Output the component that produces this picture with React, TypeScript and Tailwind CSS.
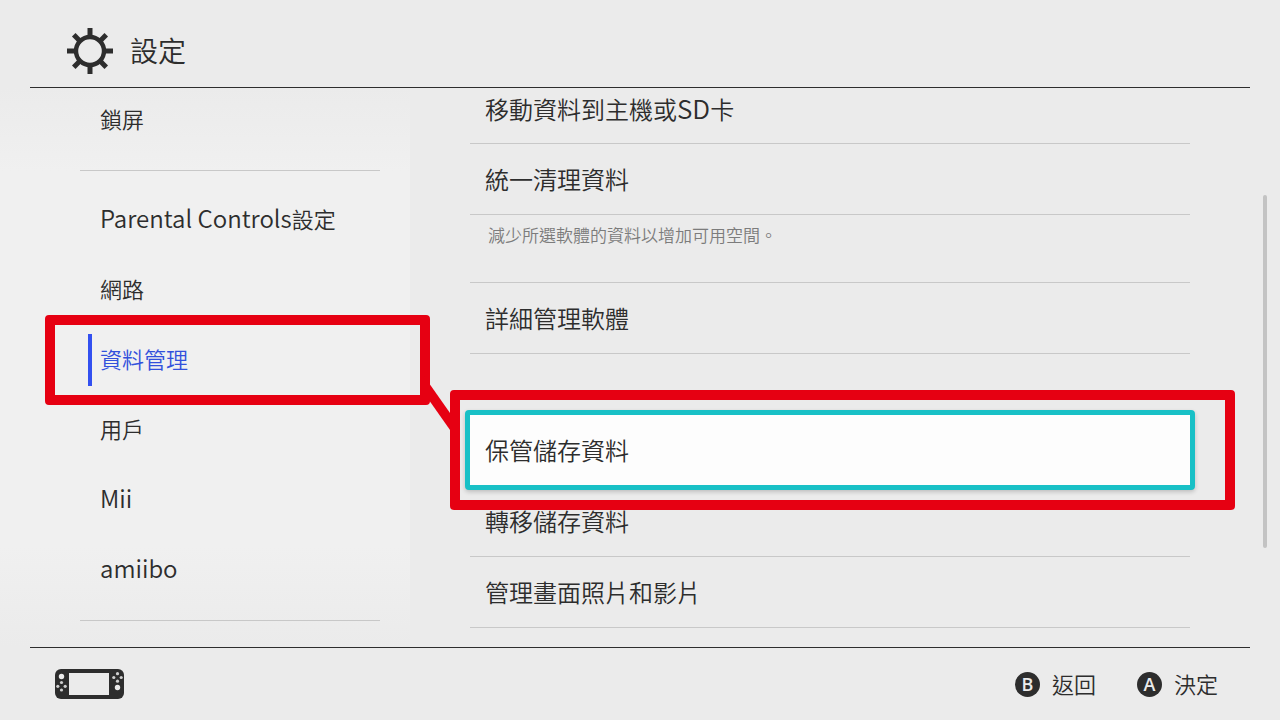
import { useState } from 'react';
import type { ReactNode } from 'react';

type NavItem = {
  id: string;
  label: ReactNode;
};

// Latin glyphs are set slightly larger than the CJK ones
const Latin = ({ children, large = false }: { children: string; large?: boolean }) => (
  <span className={large ? 'text-[26px]' : 'text-[24px]'}>
    {children}
  </span>
);

const topItems: NavItem[] = [{ id: 'lock', label: '鎖屏' }];

const mainItems: NavItem[] = [
  { id: 'parental', label: <><Latin>Parental Controls</Latin>設定</> },
  { id: 'network', label: '網路' },
  { id: 'data', label: '資料管理' },
  { id: 'users', label: '用戶' },
  { id: 'mii', label: <Latin>Mii</Latin> },
  { id: 'amiibo', label: <Latin>amiibo</Latin> },
];

const GearIcon = () => (
  <svg viewBox="0 0 48 48" className="h-12 w-12" fill="none" stroke="#2d2d2d" aria-hidden="true">
    <circle cx="24" cy="24" r="14" strokeWidth="4.4" />
    {[0, 45, 90, 135, 180, 225, 270, 315].map((angle) => (
      <path key={angle} d="M24 1v8" strokeWidth="5" transform={`rotate(${angle} 24 24)`} />
    ))}
  </svg>
);

const ConsoleIcon = () => (
  <svg viewBox="0 0 69 30" className="h-[30px] w-[69px]" aria-hidden="true">
    <rect width="69" height="30" rx="6" fill="#2d2d2d" />
    <g fill="#ebebeb">
      <rect x="14" y="4" width="40" height="22" />
      <circle cx="6.5" cy="7.5" r="2.7" />
      <circle cx="62.5" cy="18.5" r="2.7" />
      <g fill="#d0d0d0">
        <circle cx="6.5" cy="13.5" r="1.6" />
        <circle cx="2.8" cy="17.3" r="1.6" />
        <circle cx="10.2" cy="17.3" r="1.6" />
        <circle cx="6.5" cy="21" r="1.6" />
        <circle cx="62.5" cy="4.7" r="1.6" />
        <circle cx="58.8" cy="8.5" r="1.6" />
        <circle cx="66.2" cy="8.5" r="1.6" />
        <circle cx="62.5" cy="12.2" r="1.6" />
      </g>
    </g>
  </svg>
);

const NavButton = ({ item, active, onSelect }: {
  item: NavItem;
  active: boolean;
  onSelect: (id: string) => void;
}) => (
  <li className="relative">
    <button
      type="button"
      onClick={() => onSelect(item.id)}
      className={`flex h-[70px] w-full items-center pl-2 text-left text-[22px] ${
        active ? 'text-[#3250dc]' : 'text-[#2d2d2d]'
      }`}
    >
      <span
        className={`flex h-[52px] items-center border-l-4 pb-1 pl-2 ${
          active ? 'border-[#3250f0]' : 'border-transparent'
        }`}
      >
        <span className="leading-8">{item.label}</span>
      </span>
    </button>
    {item.id === 'data' && (
      <div className="pointer-events-none absolute -top-[10px] -right-[50px] -bottom-[10px] -left-[35px] rounded-[4px] border-[10px] border-[#e60012]" />
    )}
  </li>
);

const Divider = () => (
  <div className="flex h-[30px] items-center">
    <hr className="w-full border-[#c8c8c8]" />
  </div>
);

const Row = ({ children, focused = false }: { children: ReactNode; focused?: boolean }) => (
  <button
    type="button"
    className={`relative flex h-[71px] w-full items-center border-b pl-[15px] text-left text-[24px] leading-8 ${
      focused ? 'border-transparent' : 'border-[#c8c8c8]'
    }`}
  >
    {focused && (
      <span className="absolute -inset-x-[5px] -top-[5px] -bottom-[5px] rounded-[4px] border-[5px] border-[#18c0c6] bg-[#fdfdfd] shadow-[0_2px_4px_#00000030]" />
    )}
    <span className="relative">{children}</span>
  </button>
);

// Red frame around the focused row, tied back to the sidebar frame
const Callout = () => (
  <div className="pointer-events-none absolute -top-[25px] -right-[45px] -bottom-[24px] -left-5 z-10 rounded-[4px] border-[10px] border-[#e60012]">
    <svg
      viewBox="0 0 30 60"
      className="absolute -top-[25px] -left-10 h-[60px] w-[30px]"
      fill="#e60012"
      aria-hidden="true"
    >
      <path d="M4 1 L30 38 V55 L4 18 Z" />
    </svg>
  </div>
);

const HintButton = ({ letter, label }: { letter: string; label: string }) => (
  <button type="button" className="flex items-center gap-3 text-[22px] leading-8">
    <span className="flex h-[25px] w-[25px] items-center justify-center rounded-full bg-[#2d2d2d] font-['Open_Sans'] text-[18px] leading-none font-semibold text-[#ebebeb]">
      {letter}
    </span>
    <span className="pb-[2px]">{label}</span>
  </button>
);

export default function App() {
  const [selected, setSelected] = useState('data');

  return (
    <div className="flex min-h-screen flex-col bg-[#ebebeb] font-['Noto_Sans_CJK_TC',sans-serif] font-[350] text-[#2d2d2d]">
      <header className="mx-[30px] flex h-[88px] items-center gap-4 border-b border-[#2d2d2d] pt-[14px] pl-9">
        <GearIcon />
        <h1 className="pb-[2px] text-[28px] leading-8 font-[350]">設定</h1>
      </header>

      <main className="flex flex-1 overflow-hidden">
        <nav className="w-[410px] shrink-0 bg-[linear-gradient(#ebebeb,#f0f0f0_15%,#f0f0f0_82%,#ebebeb)] pr-[30px] pl-20">
          <ul className="-mt-[3px]">
            {topItems.map((item) => (
              <NavButton key={item.id} item={item} active={selected === item.id} onSelect={setSelected} />
            ))}
          </ul>
          <Divider />
          <ul>
            {mainItems.map((item) => (
              <NavButton key={item.id} item={item} active={selected === item.id} onSelect={setSelected} />
            ))}
          </ul>
          <Divider />
        </nav>

        <section className="min-w-0 flex-1 pr-[73px] pl-[60px]">
          <div className="-mt-[15px]">
            <Row>移動資料到主機或<Latin large>SD</Latin>卡</Row>
            <Row>統一清理資料</Row>
            <p className="h-[68px] border-b border-[#c8c8c8] pt-2 pl-[18px] text-[17px] leading-6 text-[#7c7c7c]">
              減少所選軟體的資料以增加可用空間。
            </p>
            <Row>詳細管理軟體</Row>
            <div className="relative mt-[61px]">
              <Row focused>保管儲存資料</Row>
              <Callout />
            </div>
            <Row>轉移儲存資料</Row>
            <Row>管理畫面照片和影片</Row>
          </div>
        </section>

        <div className="mt-[107px] mr-[13px] h-[353px] w-1 rounded-full bg-[#c3c3c3]" />
      </main>

      <footer className="mx-[30px] flex h-[73px] items-center justify-between border-t border-[#2d2d2d] pr-8 pl-[25px]">
        <ConsoleIcon />
        <div className="flex gap-[41px]">
          <HintButton letter="B" label="返回" />
          <HintButton letter="A" label="決定" />
        </div>
      </footer>
    </div>
  );
}
